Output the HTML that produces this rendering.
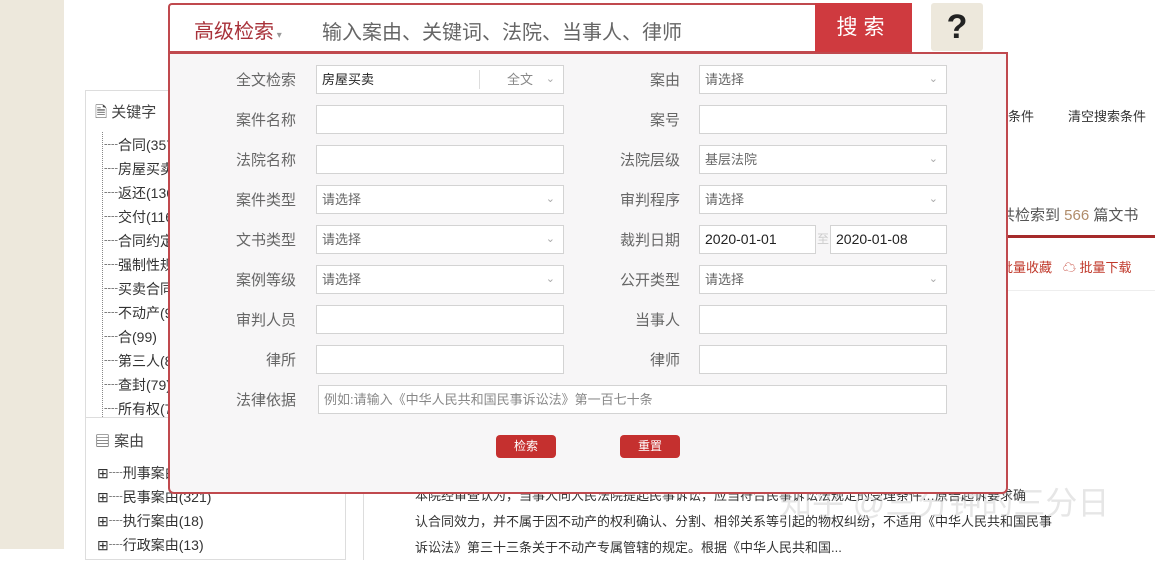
<!DOCTYPE html>
<html><head><meta charset="utf-8"><style>
*{margin:0;padding:0;box-sizing:border-box}
body{width:1155px;height:549px;overflow:hidden;background:#fff;font-family:"Liberation Sans","Microsoft YaHei","Noto Sans CJK SC",sans-serif;position:relative;color:#333}
.a{position:absolute;white-space:nowrap}
.strip{left:0;top:0;width:64px;height:549px;background:#ede8dc}
.side{left:85px;top:90px;width:261px;height:470px;border:1px solid #ddd;background:#fff}
.item{font-size:14px;color:#333}
.cont{left:363px;top:300px;width:800px;height:260px;border-left:1px solid #ddd}
.panel{left:168px;top:52px;width:840px;height:442px;background:#f7f6f7;border:2px solid #c0494e;border-radius:0 0 6px 6px}
.top{left:168px;top:3px;width:647px;height:50px;border:2px solid #c0494e;border-right:none;border-radius:4px 0 0 0;background:#fff}
.btn{left:815px;top:3px;width:97px;height:50px;background:#cf3a3f;color:#fff;font-size:21px;text-align:center;line-height:50px;letter-spacing:6px}
.help{left:931px;top:3px;width:52px;height:48px;background:#ede8dc;border-radius:3px;text-align:center;font:bold 34px/48px "Liberation Sans",sans-serif;color:#222}
.lbl{font-size:15px;color:#666;text-align:right;width:100px}
.in{height:29px;background:#fff;border:1px solid #d3d3d3;font-size:13px;line-height:27px;padding-left:5px;color:#666}
.ch{position:absolute;right:8px;top:0;color:#aaa;font-size:11px}
.rb{height:23px;width:60px;background:#c5302f;color:#fff;font-size:12px;text-align:center;line-height:23px;border-radius:4px}
</style></head><body>
<div class="a strip"></div>
<div class="a side"></div>
<div class="a" style="left:95px;top:101px;font-size:15px;color:#444">🗎 关键字</div>
<div class="a" style="left:102px;top:132px;height:285px;border-left:1px dotted #888"></div>
<div class="a item" style="left:104px;top:133px;line-height:24px">┈合同(357)<br>┈房屋买卖<br>┈返还(136)<br>┈交付(116)<br>┈合同约定<br>┈强制性规<br>┈买卖合同<br>┈不动产(9<br>┈合(99)<br>┈第三人(8<br>┈查封(79)<br>┈所有权(7</div>
<div class="a" style="left:85px;top:417px;width:261px;border-top:1px solid #ddd"></div>
<div class="a" style="left:95px;top:430px;font-size:15px;color:#444">▤ 案由</div>
<div class="a item" style="left:97px;top:461px;line-height:24px">⊞┈刑事案由(34)<br>⊞┈民事案由(321)<br>⊞┈执行案由(18)<br>⊞┈行政案由(13)</div>
<div class="a cont"></div>
<div class="a" style="left:1008px;top:106px;font-size:13px">条件</div>
<div class="a" style="left:1068px;top:106px;font-size:13px">清空搜索条件</div>
<div class="a" style="left:1000px;top:204px;font-size:15px;color:#555">共检索到 <span style="color:#b08c6a">566</span> 篇文书</div>
<div class="a" style="left:1008px;top:235px;width:147px;border-top:3px solid #a52a2a"></div>
<div class="a" style="left:1000px;top:257px;font-size:13px;color:#c0392b">批量收藏 &nbsp; ☁ 批量下载</div>
<div class="a" style="left:1008px;top:290px;width:147px;border-top:1px solid #eee"></div>
<div class="a" style="left:415px;top:483px;font-size:13px;line-height:26px;color:#333">本院经审查认为，当事人向人民法院提起民事诉讼，应当符合民事诉讼法规定的受理条件…原告起诉要求确<br>认合同效力，并不属于因不动产的权利确认、分割、相邻关系等引起的物权纠纷，不适用《中华人民共和国民事<br>诉讼法》第三十三条关于不动产专属管辖的规定。根据《中华人民共和国...</div>
<div class="a" style="left:780px;top:478px;font-size:32px;color:rgba(200,200,200,.45)">知乎 @三分钟的三分日</div>
<div class="a top"></div>
<div class="a" style="left:194px;top:15px;font-size:20px;color:#a8323a">高级检索<span style="font-size:10px;color:#999"> ▾</span></div>
<div class="a" style="left:322px;top:16px;font-size:20px;color:#666">输入案由、关键词、法院、当事人、律师</div>
<div class="a btn">搜索</div>
<div class="a help">?</div>
<div class="a panel"></div>

<div class="a lbl" style="left:196px;top:69px">全文检索</div>
<div class="a in" style="left:316px;top:65px;width:248px;color:#222">房屋买卖<span style="position:absolute;left:162px;top:4px;height:19px;border-left:1px solid #ddd"></span><span style="position:absolute;left:190px;color:#888">全文</span><span class="ch">⌄</span></div>
<div class="a lbl" style="left:580px;top:69px">案由</div>
<div class="a in" style="left:699px;top:65px;width:248px">请选择<span class="ch">⌄</span></div>

<div class="a lbl" style="left:196px;top:109px">案件名称</div>
<div class="a in" style="left:316px;top:105px;width:248px"></div>
<div class="a lbl" style="left:580px;top:109px">案号</div>
<div class="a in" style="left:699px;top:105px;width:248px"></div>

<div class="a lbl" style="left:196px;top:149px">法院名称</div>
<div class="a in" style="left:316px;top:145px;width:248px"></div>
<div class="a lbl" style="left:580px;top:149px">法院层级</div>
<div class="a in" style="left:699px;top:145px;width:248px">基层法院<span class="ch">⌄</span></div>

<div class="a lbl" style="left:196px;top:189px">案件类型</div>
<div class="a in" style="left:316px;top:185px;width:248px">请选择<span class="ch">⌄</span></div>
<div class="a lbl" style="left:580px;top:189px">审判程序</div>
<div class="a in" style="left:699px;top:185px;width:248px">请选择<span class="ch">⌄</span></div>

<div class="a lbl" style="left:196px;top:229px">文书类型</div>
<div class="a in" style="left:316px;top:225px;width:248px">请选择<span class="ch">⌄</span></div>
<div class="a lbl" style="left:580px;top:229px">裁判日期</div>
<div class="a in" style="left:699px;top:225px;width:117px;color:#222;font-size:14px">2020-01-01</div>
<div class="a" style="left:817px;top:230px;font-size:12px;color:#ccc">至</div>
<div class="a in" style="left:830px;top:225px;width:117px;color:#222;font-size:14px">2020-01-08</div>

<div class="a lbl" style="left:196px;top:269px">案例等级</div>
<div class="a in" style="left:316px;top:265px;width:248px">请选择<span class="ch">⌄</span></div>
<div class="a lbl" style="left:580px;top:269px">公开类型</div>
<div class="a in" style="left:699px;top:265px;width:248px">请选择<span class="ch">⌄</span></div>

<div class="a lbl" style="left:196px;top:309px">审判人员</div>
<div class="a in" style="left:316px;top:305px;width:248px"></div>
<div class="a lbl" style="left:580px;top:309px">当事人</div>
<div class="a in" style="left:699px;top:305px;width:248px"></div>

<div class="a lbl" style="left:196px;top:349px">律所</div>
<div class="a in" style="left:316px;top:345px;width:248px"></div>
<div class="a lbl" style="left:580px;top:349px">律师</div>
<div class="a in" style="left:699px;top:345px;width:248px"></div>

<div class="a lbl" style="left:196px;top:389px">法律依据</div>
<div class="a in" style="left:318px;top:385px;width:629px;color:#888">例如:请输入《中华人民共和国民事诉讼法》第一百七十条</div>

<div class="a rb" style="left:496px;top:435px">检索</div>
<div class="a rb" style="left:620px;top:435px">重置</div>
</body></html>
